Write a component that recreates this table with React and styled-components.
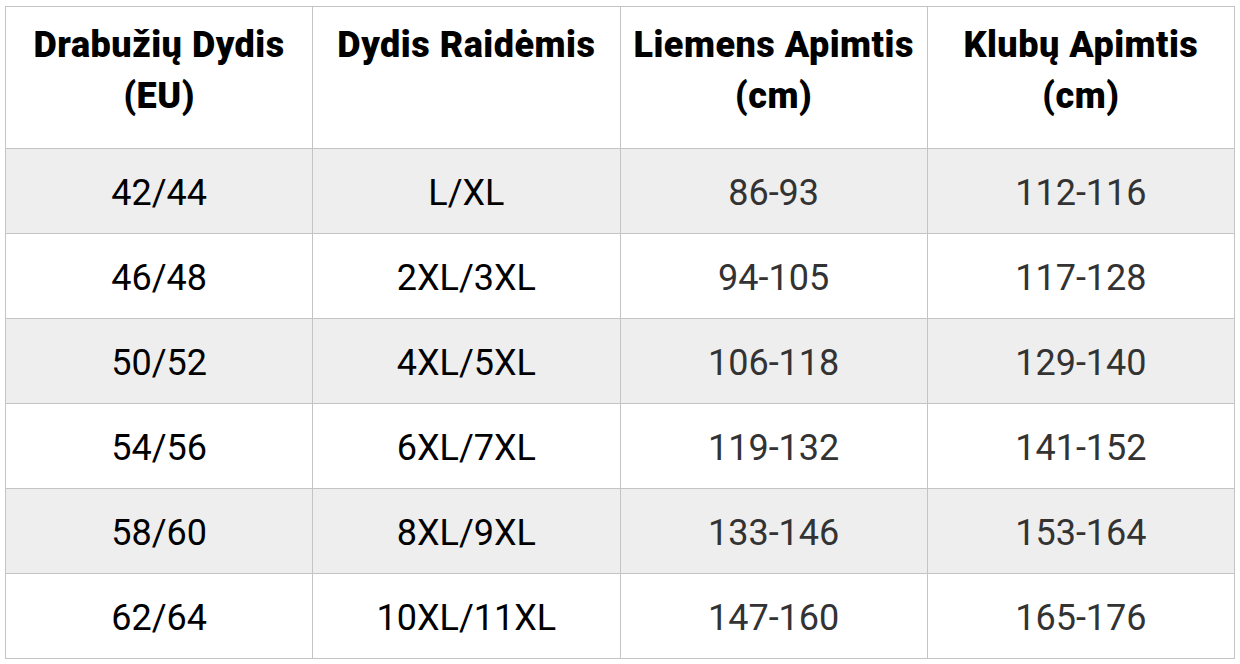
import React from "react";
import styled, { createGlobalStyle } from "styled-components";

const GlobalStyle = createGlobalStyle`
  html, body {
    margin: 0;
    padding: 0;
    background: #fff;
  }
  body {
    font-family: Roboto, "Liberation Sans", sans-serif;
  }
`;

const Wrap = styled.div`
  padding: 6px 0 0 5px;
`;

const Table = styled.table`
  width: 1230px;
  border-collapse: collapse;
  table-layout: fixed;
  border: 1px solid #c4c4c4;
`;

const HeadCell = styled.th`
  height: 142px;
  padding: 13px 4px 0;
  vertical-align: top;
  border: 1px solid #c4c4c4;
  font-size: 36px;
  font-weight: 900;
  letter-spacing: 0.5px;
  line-height: 51px;
  color: #000;
  text-align: center;
  box-sizing: border-box;
`;

const Row = styled.tr`
  background: ${({ $striped }) => ($striped ? "#eeeeee" : "#ffffff")};
`;

const Cell = styled.td`
  height: 85px;
  padding: 4px 0 0;
  border: 1px solid #c4c4c4;
  font-size: 36px;
  font-weight: 400;
  text-align: center;
  vertical-align: middle;
  color: ${({ $muted }) => ($muted ? "#333333" : "#000000")};
  box-sizing: border-box;
`;

const headers = [
  ["Drabužių Dydis", "(EU)"],
  ["Dydis Raidėmis"],
  ["Liemens Apimtis", "(cm)"],
  ["Klubų Apimtis", "(cm)"],
];

const rows = [
  ["42/44", "L/XL", "86-93", "112-116"],
  ["46/48", "2XL/3XL", "94-105", "117-128"],
  ["50/52", "4XL/5XL", "106-118", "129-140"],
  ["54/56", "6XL/7XL", "119-132", "141-152"],
  ["58/60", "8XL/9XL", "133-146", "153-164"],
  ["62/64", "10XL/11XL", "147-160", "165-176"],
];

export default function App() {
  return (
    <>
      <GlobalStyle />
      <Wrap>
        <Table>
          <thead>
            <tr>
              {headers.map((lines) => (
                <HeadCell key={lines[0]}>
                  {lines.map((l, i) => (
                    <React.Fragment key={l}>
                      {i > 0 && <br />}
                      {l}
                    </React.Fragment>
                  ))}
                </HeadCell>
              ))}
            </tr>
          </thead>
          <tbody>
            {rows.map((r, i) => (
              <Row key={r[0]} $striped={i % 2 === 0}>
                {r.map((v, j) => (
                  <Cell key={j} $muted={j >= 2}>
                    {v}
                  </Cell>
                ))}
              </Row>
            ))}
          </tbody>
        </Table>
      </Wrap>
    </>
  );
}
